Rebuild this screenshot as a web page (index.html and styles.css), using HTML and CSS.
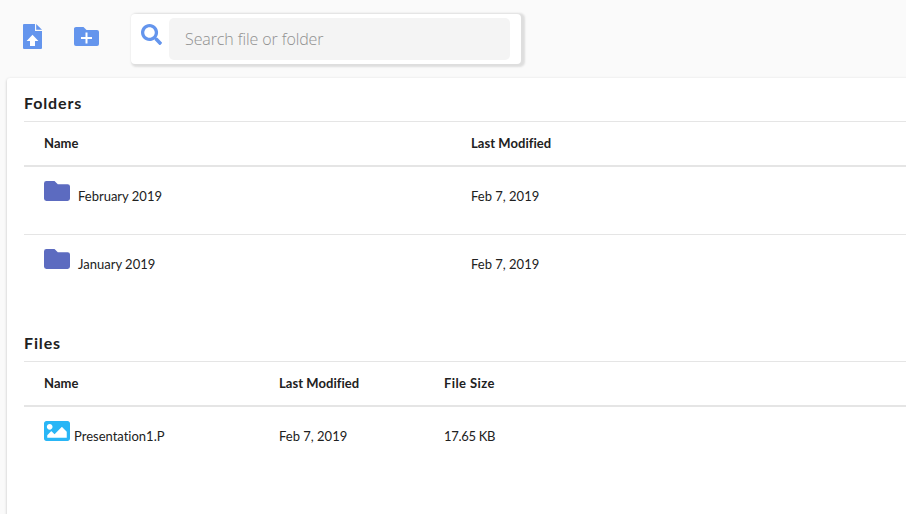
FILE: index.html
```
<!DOCTYPE html>
<html lang="en">
<head>
<meta charset="utf-8">
<title>Files and folders</title>
<link rel="stylesheet" href="styles.css">
</head>
<body>
<header class="toolbar">
  <button class="tool upload" aria-label="Upload file">
    <svg width="19" height="25" viewBox="0 0 19 25"><path fill="currentColor" d="M1 0h11v7h7v17q0 1-1 1H1q-1 0-1-1V1q0-1 1-1z"/><path fill="currentColor" d="M13.2 0L19 5.8h-5.8z"/><path fill="#fff" d="M9.500 10.800l5.900 6.200h-3.400v5H7v-5H3.600z"/></svg>
  </button>
  <button class="tool add-folder" aria-label="New folder">
    <svg width="25" height="19" viewBox="0 0 25 19"><path fill="currentColor" d="M2 0h7.500l3 3H23q2 0 2 2v12q0 2-2 2H2q-2 0-2-2V2q0-2 2-2z"/><path fill="#fff" d="M11.500 5.500h2v4.500H18v2h-4.500v4.500h-2V12H7v-2h4.500z"/></svg>
  </button>
  <div class="search">
    <svg class="search-icon" width="21" height="21" viewBox="0 0 512 512"><path fill="currentColor" d="M505 442.700 405.300 343c-4.500-4.500-10.600-7-17-7H372c27.600-35.300 44-79.700 44-128C416 93.100 322.900 0 208 0S0 93.100 0 208s93.100 208 208 208c48.300 0 92.700-16.400 128-44v16.300c0 6.400 2.500 12.500 7 17l99.700 99.700c9.400 9.400 24.600 9.400 33.900 0l28.300-28.300c9.400-9.400 9.400-24.600.1-34zM208 336c-70.700 0-128-57.200-128-128 0-70.700 57.200-128 128-128 70.700 0 128 57.200 128 128 0 70.700-57.200 128-128 128z"/></svg>
    <input class="search-input" type="text" placeholder="Search file or folder">
  </div>
</header>
<main class="panel">
  <section class="folders">
    <h2>Folders</h2>
    <div class="row head"><span>Name</span><span>Last Modified</span></div>
    <div class="row">
      <span class="name"><svg class="folder" width="26" height="20" viewBox="0 0 26 20"><path fill="currentColor" d="M2.400 0H10.500l3.300 3.200H23.600Q26 3.200 26 5.400V17.600Q26 20 23.600 20H2.400Q0 20 0 17.600V2.400Q0 0 2.400 0z"/></svg><span>February 2019</span></span><span>Feb 7, 2019</span>
    </div>
    <div class="row">
      <span class="name"><svg class="folder" width="26" height="20" viewBox="0 0 26 20"><path fill="currentColor" d="M2.400 0H10.500l3.300 3.200H23.600Q26 3.200 26 5.400V17.600Q26 20 23.600 20H2.400Q0 20 0 17.600V2.400Q0 0 2.400 0z"/></svg><span>January 2019</span></span><span>Feb 7, 2019</span>
    </div>
  </section>
  <section class="files">
    <h2>Files</h2>
    <div class="row head"><span>Name</span><span>Last Modified</span><span class="size-head">File Size</span></div>
    <div class="row">
      <span class="name"><svg class="image" width="26" height="20" viewBox="0 64 512 384" preserveAspectRatio="none"><path fill="currentColor" d="M464 448H48c-26.500 0-48-21.500-48-48V112c0-26.500 21.500-48 48-48h416c26.500 0 48 21.500 48 48v288c0 26.500-21.500 48-48 48zM112 120c-30.900 0-56 25.100-56 56s25.100 56 56 56 56-25.100 56-56-25.100-56-56-56zM64 384h384V272l-87.500-87.500c-4.700-4.700-12.300-4.700-17 0L208 320l-55.500-55.500c-4.700-4.700-12.300-4.700-17 0L64 336v48z"/></svg><span>Presentation1.P</span></span><span>Feb 7, 2019</span><span class="size">17.65 KB</span>
    </div>
  </section>
</main>
</body>
</html>
```
FILE: styles.css
```
* { box-sizing: border-box; }
body {
  margin: 0;
  height: 514px;
  overflow: hidden;
  background: #fafafa;
  color: #212121;
  font: 13px/20px "Trebuchet MS", Lato, sans-serif;
  font-variant-ligatures: none;
}
svg { display: block; flex: none; }
.toolbar {
  display: flex;
  align-items: flex-start;
  height: 78px;
  padding: 14px 0 0 23px;
  color: #6495ed;
}
.tool { padding: 0; border: 0; background: none; color: inherit; }
.upload { margin: 10px 32px 0 0; }
.add-folder { margin: 13px 32px 0 0; }
.search {
  display: flex;
  width: 390px;
  height: 50px;
  padding: 4px 11px 4px 10px;
  border-radius: 4px;
  background: #fff;
  box-shadow: 2px 1px 2px 1.5px #dedede;
}
.search-icon { margin: 6px 7px 0 0; }
.search-input {
  width: 341px;
  height: 42px;
  padding: 0 16px;
  border: 0;
  border-radius: 5px;
  background: #f4f4f4;
  font: 300 16px "Open Sans", sans-serif;
  letter-spacing: -.1px;
}
.search-input::placeholder { color: #909090; opacity: 1; }
.panel {
  height: 450px;
  margin: 0 -8px 0 7px;
  padding: 0 0 0 17px;
  border-radius: 3px;
  background: #fff;
  box-shadow: 0 1px 3px rgba(0, 0, 0, .24);
}
h2 {
  height: 43px;
  margin: 0;
  padding-top: 15px;
  font-size: 16px;
  line-height: 20px;
  font-weight: 700;
  letter-spacing: .85px;
}
.folders { height: 240px; }
.row {
  display: grid;
  height: 68px;
  padding: 14px 0 0 20px;
  border-top: 1px solid #e5e5e5;
}
.folders .row { grid-template-columns: 427px 1fr; }
.files .row { grid-template-columns: 235px 165px 1fr; }
.row > span { padding-top: 5px; }
.row > .name { display: flex; padding-top: 0; }
.name > span { padding-top: 5px; }
.row.head {
  height: 44px;
  padding-top: 6px;
  font-weight: 700;
  letter-spacing: .05px;
}
.size-head { letter-spacing: .4px; }
.size { letter-spacing: -.3px; }
.head + .row { height: 69px; border-top-width: 2px; }
.folder { margin-right: 8px; color: #5c6bc0; }
.image { margin-right: 4px; color: #29b6f6; }
```
